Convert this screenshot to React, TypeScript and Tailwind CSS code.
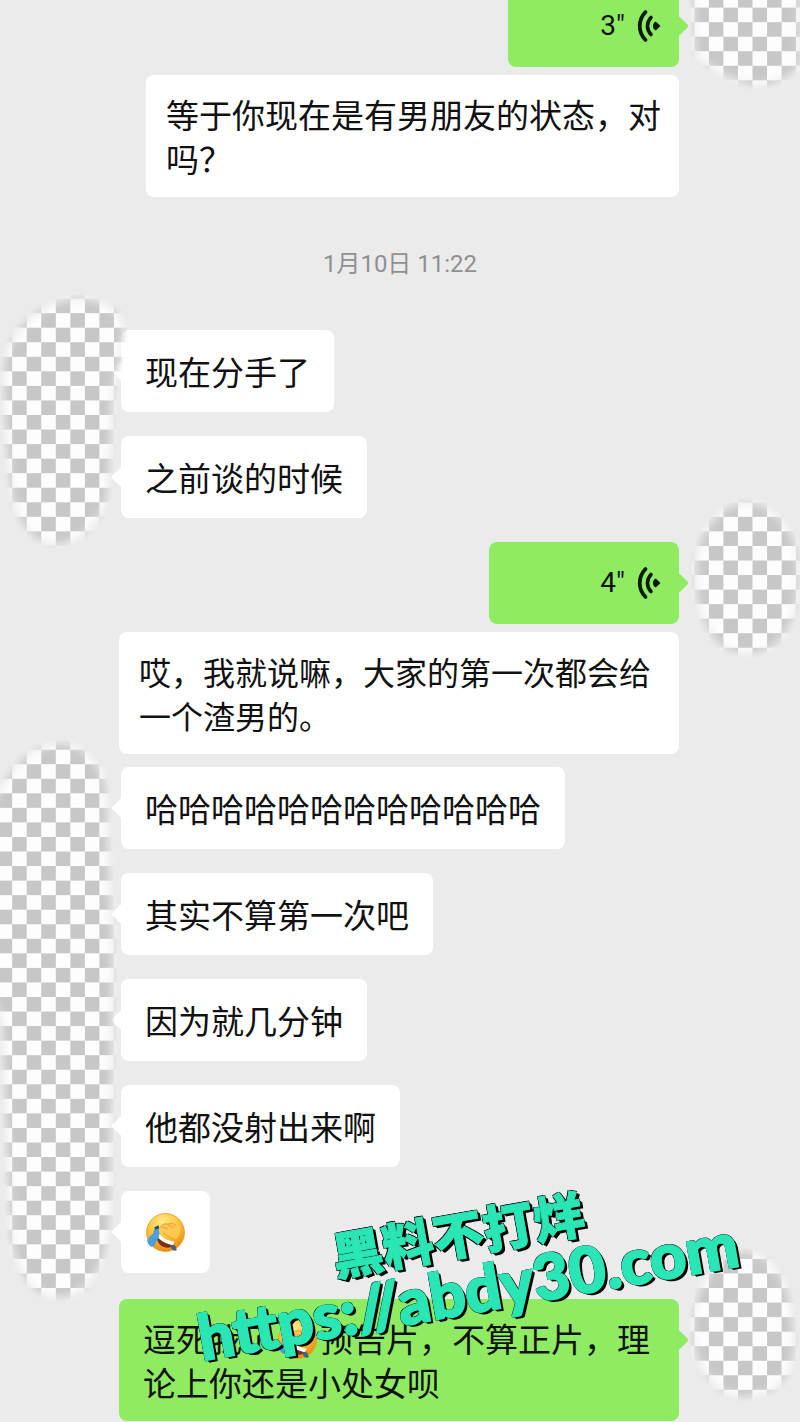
import React, { useId } from 'react';
import clsx from 'clsx';

type Side = 'left' | 'right';

const CELL = 14.55;

interface MosaicProps {
  box: [number, number, number, number];
  side: Side;
  shape: string;
  className: string;
}

// Checkerboard smudge that hides the avatars
const Mosaic: React.FC<MosaicProps> = ({ box, side, shape, className }) => {
  const id = useId();
  const [x, y, w, h] = box;
  return (
    <svg viewBox={`${x} ${y} ${w} ${h}`} className={clsx('absolute', className)} aria-hidden="true">
      <defs>
        <pattern
          id={`${id}p`}
          x={side === 'left' ? -2.4 : 694.3}
          y={7.6}
          width={CELL * 2}
          height={CELL * 2}
          patternUnits="userSpaceOnUse"
        >
          <rect width={CELL * 2} height={CELL * 2} fill="#fdfdfd" />
          <rect width={CELL} height={CELL} fill="#c7c7c7" />
          <rect x={CELL} y={CELL} width={CELL} height={CELL} fill="#c7c7c7" />
        </pattern>
        <filter id={`${id}f`} x="-20%" y="-20%" width="140%" height="140%">
          <feGaussianBlur stdDeviation="3.6" />
        </filter>
        <mask id={`${id}m`} maskUnits="userSpaceOnUse" x={x} y={y} width={w} height={h}>
          <path d={shape} fill="#fff" stroke="#000" strokeWidth="13" filter={`url(#${id}f)`} />
        </mask>
      </defs>
      <rect x={x} y={y} width={w} height={h} fill={`url(#${id}p)`} mask={`url(#${id}m)`} />
    </svg>
  );
};

const FacepalmEmoji: React.FC<{ className?: string }> = ({ className }) => {
  const id = useId();
  return (
    <svg viewBox="0 0 40 40" className={clsx('h-[41px] w-[41px] shrink-0', className)} role="img" aria-label="捂脸">
      <defs>
        <radialGradient id={id} cx="42%" cy="22%" r="78%">
          <stop offset="0" stopColor="#ffe98a" />
          <stop offset="0.5" stopColor="#fdc83a" />
          <stop offset="1" stopColor="#ee8a12" />
        </radialGradient>
      </defs>
      <circle cx="20" cy="20" r="18.5" fill={`url(#${id})`} stroke="#e39a22" strokeWidth="0.8" />
      <path d="M11 22c4 4 10 7 18 8-2 5-7 6-11 4-4-1-7-6-7-12z" fill="#7b3210" />
      <path d="M13 21c4 4 9 7 16 8l-1.500 3.500c-6-1-12-4-15.500-8z" fill="#fff" />
      <path d="M15 14c2-3 5-4 7-3 4-2 9-1 11 2 3 4 1 11-3 13-5 0-9-2-12-5l-4-3c-1-2 0-3 1-4z" fill="#fcc850" />
      <path d="M15 15c2-3 5-4 7-3 3-1 6-1 8 1M17 15l5 1M23 13l5 2M18 21c3 2 6 4 10 5" fill="none" stroke="#e5983a" strokeWidth="0.8" strokeLinecap="round" />
      <path d="M12 14c-3 2-4 5-4 7-3 2-5 5-6 7 1 4 3 6 5 6 4-2 4-6 6-9 2-3 1-7-1-11z" fill="#4a9fdd" />
      <path d="M9 15l4-2 1 3-4 1z" fill="#22496e" />
      <path d="M25 33c2-2 4-1 5 1l1 3c-1 1-3 1-4 0-1-1-2-2-2-4z" fill="#3f6582" />
    </svg>
  );
};

const VoiceIcon: React.FC = () => (
  <svg viewBox="0 0 24 34" className="h-[34px] w-6" fill="none" stroke="#0a1a05" strokeLinecap="round" aria-hidden="true">
    <path d="M8.500 3C0.800 11 0.800 23 8.500 31" strokeWidth="3.800" />
    <path d="M14 8.500C9.300 13.500 9.300 20.500 14 25.500" strokeWidth="3.600" />
    <path d="M18.800 12.500L23.500 17l-4.700 4.500c-3.800-1.600-3.800-7.400 0-9z" fill="#0a1a05" stroke="none" />
  </svg>
);

const Bubble: React.FC<{ children: React.ReactNode }> = ({ children }) => (
  <div className="relative rounded-lg bg-white px-6 py-[19px]">
    <span className="absolute top-[34px] -left-[7px] size-3.5 rotate-45 rounded-xs bg-white" />
    <p className="relative flex min-h-11 items-center">{children}</p>
  </div>
);

const Voice: React.FC<{ seconds: number; className: string }> = ({ seconds, className }) => (
  <button
    type="button"
    className={clsx('relative flex h-[82px] items-center justify-end gap-3 rounded-lg bg-[#8fec62] pr-[18px]', className)}
  >
    <span className="absolute top-[34px] -right-[7px] size-3.5 rotate-45 rounded-xs bg-[#8fec62]" />
    <span className="font-[Roboto,sans-serif] text-[28px]">{seconds}"</span>
    <VoiceIcon />
  </button>
);

const App: React.FC = () => {
  const laterMessages = ['哈哈哈哈哈哈哈哈哈哈哈哈', '其实不算第一次吧', '因为就几分钟', '他都没射出来啊'];

  return (
    <main className="relative min-h-screen overflow-hidden bg-[#ebebeb] pb-px font-['Noto_Sans_CJK_SC',sans-serif] text-[33px] leading-11 text-[#111]">
      {/* Voice message and its transcript */}
      <section className="relative -mt-[15px] flex flex-col items-end gap-2 pr-[121px]">
        <Voice seconds={3} className="w-[171px]" />
        <p className="max-w-[533px] rounded-lg bg-white py-[17px] pr-4 pl-5">等于你现在是有男朋友的状态，对吗？</p>
        <Mosaic
          box={[680, 0, 120, 100]}
          side="right"
          shape="M690 -20H803V66C790 82 770 90 752 88C730 82 704 72 692 52Z"
          className="top-[15px] right-0 h-[100px] w-[120px]"
        />
      </section>

      <time className="block pt-[51px] pb-[49px] text-center font-[Roboto,'Noto_Sans_CJK_SC',sans-serif] text-2xl leading-[33px] text-[#909090]">
        1月10日 11:22
      </time>

      <section className="relative flex flex-col items-start gap-6 pl-[121px]">
        <Bubble>现在分手了</Bubble>
        <Bubble>之前谈的时候</Bubble>
        <Mosaic
          box={[0, 285, 130, 275]}
          side="left"
          shape="M58 299C82 291 118 298 125 322C129 345 118 375 115 400C114 440 113 480 109 502C102 526 80 547 56 547C30 547 14 522 9 495C4 455 -1 400 2 360C8 330 30 308 58 299Z"
          className="-top-[45px] left-0 h-[275px] w-[130px]"
        />
      </section>

      <section className="relative mt-6 flex flex-col items-end gap-2 pr-[121px]">
        <Voice seconds={4} className="w-[190px]" />
        <p className="max-w-[560px] rounded-lg bg-white py-[17px] pr-4 pl-5 text-[32px]">
          哎，我就说嘛，大家的第一次都会给一个渣男的。
        </p>
        <Mosaic
          box={[685, 490, 115, 180]}
          side="right"
          shape="M745 500C772 499 798 525 801 560C802 600 798 630 775 648C757 660 733 659 716 645C696 622 692 600 693 565C695 530 718 501 745 500Z"
          className="-top-[52px] right-0 h-[180px] w-[115px]"
        />
      </section>

      <section className="relative mt-[13px] flex flex-col items-start gap-6 pl-[121px]">
        {laterMessages.map((message) => (
          <Bubble key={message}>{message}</Bubble>
        ))}
        <Bubble>
          <FacepalmEmoji />
        </Bubble>
        <Mosaic
          box={[0, 730, 130, 580]}
          side="left"
          shape="M58 741C84 739 105 762 109 790C111 840 112 900 116 940C115 1020 114 1120 113 1210C111 1260 96 1300 58 1300C28 1300 12 1270 8 1235C3 1150 2 1080 -1 1020L-18 980V820C-2 780 20 744 58 741Z"
          className="-top-[37px] left-0 h-[580px] w-[130px]"
        />
      </section>

      <section className="relative mt-[26px] flex flex-col items-end pr-[121px]">
        <div className="relative max-w-[560px] rounded-lg bg-[#8fec62] py-[17px] pr-4 pl-6">
          <span className="absolute top-[34px] -right-[7px] size-3.5 rotate-45 rounded-xs bg-[#8fec62]" />
          <p>
            逗死我了
            <FacepalmEmoji className="mx-0.5 inline-block align-[-8px]" />
            预告片，不算正片，理论上你还是小处女呗
          </p>
        </div>
        <Mosaic
          box={[680, 1240, 120, 170]}
          side="right"
          shape="M742 1249C770 1247 790 1275 794 1310C798 1340 800 1367 783 1385C766 1401 735 1405 718 1391C700 1376 688 1355 690 1325C691 1285 715 1251 742 1249Z"
          className="-top-[59px] right-0 h-[170px] w-[120px]"
        />
      </section>

      {/* Watermark */}
      <div className="absolute bottom-[102px] left-[189px] flex -rotate-10 flex-col items-center font-black whitespace-nowrap text-[#2ae5b4] [text-shadow:-1px_-1px_0_#000,1px_-1px_0_#000,-1px_1px_0_#000,1px_1px_0_#000,2px_2px_0_#000,3px_3px_0_#000]">
        <span className="text-[51px] leading-[56px] [-webkit-text-stroke:1px_#2ae5b4]">黑料不打烊</span>
        <span className="font-[Lato,sans-serif] text-[63px] leading-[60px] [-webkit-text-stroke:2px_#2ae5b4]">
          https://abdy30.com
        </span>
      </div>
    </main>
  );
};

export default App;
